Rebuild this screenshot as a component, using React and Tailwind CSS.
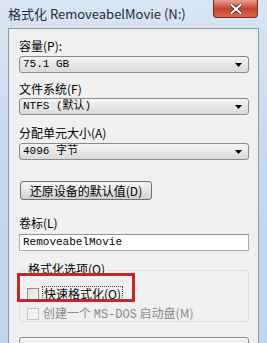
const cjk = { fontFamily: '"Noto Sans CJK SC", "Liberation Sans", sans-serif' }
const mono = { fontFamily: '"Liberation Mono", "Noto Sans CJK SC", monospace' }

function Combo({ value }) {
  return (
    <div className="h-[17px] w-[230px] flex items-center justify-between rounded-[3px] border border-[#8a8a8a] bg-gradient-to-b from-[#f4f4f4] to-[#dadada] pl-[3px] pr-[6px]">
      <span className="text-[11px] leading-none text-black" style={mono}>{value}</span>
      <svg width="7" height="4" viewBox="0 0 7 4"><path d="M0 0h7L3.5 4z" fill="#000" /></svg>
    </div>
  )
}

function Label({ children, className = "" }) {
  return <div className={"text-[12px] leading-[16px] text-black " + className} style={cjk}>{children}</div>
}

export default function App() {
  return (
    <div className="relative w-[267px] h-[343px] overflow-hidden flex flex-col bg-gradient-to-b from-[#d9e5f3] via-[#c6d8ed] to-[#c1d4ea]">
      <div className="h-[28px] shrink-0 flex items-start justify-between pl-[8px] pr-[9px]">
        <span className="mt-[5px] text-[13px] leading-[18px] text-[#1e2c3c]" style={{ fontFamily: '"Noto Sans CJK SC", "Open Sans", sans-serif' }}>
          格式化 RemoveabelMovie (N:)
        </span>
        <div className="w-[45px] h-[18px] flex items-center justify-center rounded-b-[4px] border border-t-0 border-[#7a2a1f] bg-gradient-to-b from-[#e6a08f] via-[#c9452f] to-[#d9674a]">
          <svg width="12" height="10" viewBox="0 0 12 10">
            <path d="M1.5 1l9 8M10.5 1l-9 8" stroke="#3a2a2a" strokeWidth="3.6" strokeLinecap="square" />
            <path d="M1.5 1l9 8M10.5 1l-9 8" stroke="#fff" strokeWidth="2" strokeLinecap="square" />
          </svg>
        </div>
      </div>
      <div className="relative flex-1 mx-[8px] border border-b-0 border-[#8a9ab0] bg-[#f0f0f0] pl-[10px] pr-[9px] flex flex-col">
        <Label className="mt-[9px]">容量(P):</Label>
        <div className="mt-[2px]"><Combo value="75.1 GB" /></div>
        <Label className="mt-[8px]">文件系统(F)</Label>
        <div className="mt-[1px]"><Combo value="NTFS (默认)" /></div>
        <Label className="mt-[10px]">分配单元大小(A)</Label>
        <div className="mt-[2px]"><Combo value="4096 字节" /></div>
        <button className="mt-[21px] ml-[1px] h-[19px] w-[132px] flex items-center justify-center rounded-[3px] border border-[#707070] bg-gradient-to-b from-[#f3f3f3] via-[#e6e6e6] to-[#cfcfcf] text-[12px] leading-none text-black" style={cjk}>
          还原设备的默认值(D)
        </button>
        <Label className="mt-[15px]">卷标(L)</Label>
        <div className="mt-[3px] h-[17px] w-[230px] flex items-center border border-[#abadb3] border-t-[#8f929a] bg-white pl-[3px]">
          <span className="text-[11px] leading-none text-black" style={mono}>RemoveabelMovie</span>
        </div>
        <div className="relative mt-[19px] h-[52px] w-[230px] rounded-[3px] border border-[#d5dfe5]">
          <span className="absolute -top-[10px] left-[6px] px-[2px] bg-[#f0f0f0] text-[12px] leading-[16px] text-black" style={cjk}>格式化选项(O)</span>
          <div className="mt-[15px] ml-[7px] flex items-center gap-[3px]">
            <span className="w-[12px] h-[12px] border border-[#8e8f8f] bg-gradient-to-br from-[#dcdcdc] to-[#fbfbfb]" />
            <span className="border border-dotted border-[#444] px-[1px] text-[12px] leading-[14px] text-black" style={cjk}>快速格式化(Q)</span>
          </div>
          <div className="mt-[4px] ml-[7px] flex items-center gap-[4px]">
            <span className="w-[12px] h-[12px] border border-[#c5c5c5] bg-[#f4f4f4]" />
            <span className="text-[12px] leading-[14px] text-[#8a8a8a]" style={cjk}>创建一个 <span style={mono}>MS-DOS</span> 启动盘(M)</span>
          </div>
        </div>
        <div className="mt-[15px] h-[20px] w-[230px] rounded-[3px] border border-[#8a8a8a] bg-gradient-to-b from-[#f4f4f4] to-[#dadada]" />
        <div className="absolute left-[8px] top-[244px] w-[118px] h-[29px] border-[3px] border-[#c1272d]" />
      </div>
    </div>
  )
}
